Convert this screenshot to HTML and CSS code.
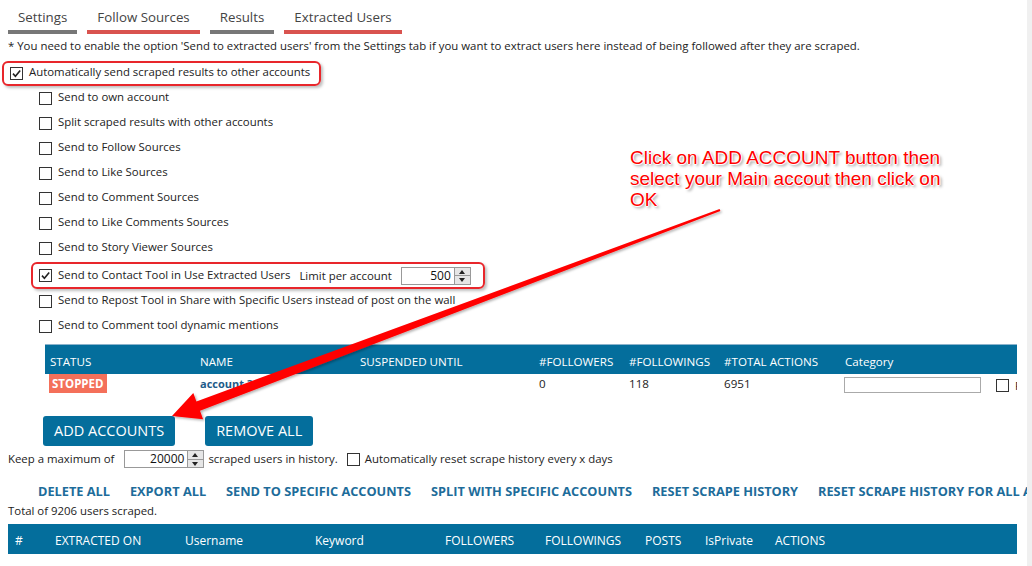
FILE: index.html
```html
<!DOCTYPE html>
<html>
<head>
<meta charset="utf-8">
<link rel="stylesheet" href="styles.css">
</head>
<body>
<div class="screen">
  <div class="page">
    <nav class="tabs">
      <span class="tab">Settings</span>
      <span class="tab red">Follow Sources</span>
      <span class="tab">Results</span>
      <span class="tab red">Extracted Users</span>
    </nav>
    <p class="note">* You need to enable the option 'Send to extracted users' from the Settings tab if you want to extract users here instead of being followed after they are scraped.</p>

    <div class="opt main hl">
      <span class="cb on"><svg viewBox="0 0 11 11"><path d="M2 5.6 L4.4 8.2 L9.2 2.4"/></svg></span>
      <span class="lbl">Automatically send scraped results to other accounts</span>
    </div>

    <div class="subs">
      <div class="opt"><span class="cb"></span><span class="lbl">Send to own account</span></div>
      <div class="opt"><span class="cb"></span><span class="lbl">Split scraped results with other accounts</span></div>
      <div class="opt"><span class="cb"></span><span class="lbl">Send to Follow Sources</span></div>
      <div class="opt"><span class="cb"></span><span class="lbl">Send to Like Sources</span></div>
      <div class="opt"><span class="cb"></span><span class="lbl">Send to Comment Sources</span></div>
      <div class="opt"><span class="cb"></span><span class="lbl">Send to Like Comments Sources</span></div>
      <div class="opt"><span class="cb"></span><span class="lbl">Send to Story Viewer Sources</span></div>
      <div class="opt contact hl">
        <span class="cb on"><svg viewBox="0 0 11 11"><path d="M2 5.6 L4.4 8.2 L9.2 2.4"/></svg></span>
        <span class="lbl">Send to Contact Tool in Use Extracted Users</span>
        <span class="limit">Limit per account</span>
        <span class="spin w70"><span class="val">500</span><span class="arrows"><i class="up"></i><i class="down"></i></span></span>
      </div>
      <div class="opt"><span class="cb"></span><span class="lbl">Send to Repost Tool in Share with Specific Users instead of post on the wall</span></div>
      <div class="opt"><span class="cb"></span><span class="lbl">Send to Comment tool dynamic mentions</span></div>
    </div>

    <div class="acc">
      <div class="acc-row acc-head">
        <span>STATUS</span><span>NAME</span><span>SUSPENDED UNTIL</span><span>#FOLLOWERS</span><span>#FOLLOWINGS</span><span>#TOTAL ACTIONS</span><span>Category</span><span></span>
      </div>
      <div class="acc-row acc-data">
        <span><b class="badge">STOPPED</b></span>
        <span class="accname">account 3</span>
        <span></span>
        <span>0</span>
        <span>118</span>
        <span>6951</span>
        <span><span class="catbox"></span></span>
        <span class="lastcol"><span class="cb"></span><span>F</span></span>
      </div>
    </div>

    <div class="btns">
      <span class="btn">ADD ACCOUNTS</span>
      <span class="btn">REMOVE ALL</span>
    </div>

    <div class="keep">
      <span>Keep a maximum of</span>
      <span class="spin w80"><span class="val">20000</span><span class="arrows"><i class="up"></i><i class="down"></i></span></span>
      <span>scraped users in history.</span>
      <span class="cb"></span>
      <span>Automatically reset scrape history every x days</span>
    </div>

    <div class="actions">
      <span>DELETE ALL</span>
      <span>EXPORT ALL</span>
      <span>SEND TO SPECIFIC ACCOUNTS</span>
      <span>SPLIT WITH SPECIFIC ACCOUNTS</span>
      <span>RESET SCRAPE HISTORY</span>
      <span>RESET SCRAPE HISTORY FOR ALL ACCOUNTS</span>
    </div>

    <div class="total">Total of 9206 users scraped.</div>

    <div class="users-head">
      <span>#</span><span>EXTRACTED ON</span><span>Username</span><span>Keyword</span><span>FOLLOWERS</span><span>FOLLOWINGS</span><span>POSTS</span><span>IsPrivate</span><span>ACTIONS</span>
    </div>
  </div>
  <div class="scroll"></div>

  <div class="callout">Click on ADD ACCOUNT button then<br>select your Main accout then click on<br>OK</div>

  <svg class="arrow" width="1032" height="566" viewBox="0 0 1032 566">
    <defs>
      <filter id="sh" x="-10%" y="-10%" width="120%" height="120%">
        <feDropShadow dx="1.5" dy="1.5" stdDeviation="1.2" flood-color="#000" flood-opacity="0.3"/>
      </filter>
    </defs>
    <polygon filter="url(#sh)" fill="#ff0000" points="172,416 193.3,393 196.4,401.4 719.6,209.1 720.4,210.9 200,410.8 203.1,419.2"/>
  </svg>
</div>
</body>
</html>
```

FILE: styles.css
```css
body {
  margin: 0;
  background: #fff;
  font-family: "Open Sans", "Noto Sans", sans-serif;
  font-size: 11.4px;
  color: #222;
}

.screen {
  position: relative;
  display: flex;
  width: 1032px;
  height: 566px;
  overflow: hidden;
}

.page {
  flex: none;
  width: 1027px;
  padding-left: 8px;
  box-sizing: border-box;
  overflow: hidden;
  white-space: nowrap;
}

.scroll {
  flex: 1;
  background: #f0f0f0;
}

/* tabs */
.tabs {
  display: flex;
  gap: 10px;
}

.tab {
  padding: 8px 10px 3px;
  font-size: 13.3px;
  line-height: 19px;
  color: #444;
  border-bottom: 4px solid #777;
}

.tab.red {
  border-color: #d9534f;
}

.note {
  margin: 4px 0 0;
  line-height: 16px;
}

/* checkbox rows */
.opt {
  display: flex;
  align-items: center;
  height: 25px;
}

.lbl {
  position: relative;
  top: -2.5px;
}

.cb {
  flex: none;
  display: inline-block;
  width: 11px;
  height: 11px;
  border: 1px solid #333;
  background: #fff;
  margin-right: 6px;
}

.cb svg {
  display: block;
  width: 11px;
  height: 11px;
}

.cb svg path {
  fill: none;
  stroke: #222;
  stroke-width: 1.6;
}

.hl {
  border: 2px solid #e8262b;
  border-radius: 6px;
  box-shadow: 2px 2px 3px rgba(0, 0, 0, 0.25);
  box-sizing: border-box;
}

.main {
  margin: 7px 0 0 -6px;
  padding-left: 6px;
  width: 319px;
}

.subs {
  padding-left: 31px;
}

.contact {
  margin: 1px 0 0 -8px;
  padding-left: 6px;
  height: 27px;
  width: 454px;
}

.contact .lbl {
  top: -1.5px;
}

.limit {
  margin-left: 9px;
  margin-right: 9px;
}

/* spin box */
.spin {
  display: inline-flex;
  height: 18px;
  border: 1px solid #999;
  box-sizing: border-box;
  background: #fff;
}

.spin.w70 { width: 70px; }
.spin.w80 { width: 80px; }

.spin .val {
  flex: 1;
  text-align: right;
  padding-right: 3px;
  line-height: 16px;
  color: #111;
  font-size: 12px;
}

.arrows {
  width: 15px;
  display: flex;
  flex-direction: column;
  border-left: 1px solid #999;
  background: #e6e6e6;
}

.arrows i {
  flex: 1;
  position: relative;
}

.arrows i + i {
  border-top: 1px solid #999;
}

.arrows i::after {
  content: "";
  position: absolute;
  left: 4px;
  top: 2px;
  border-left: 3.5px solid transparent;
  border-right: 3.5px solid transparent;
}

.arrows .up::after {
  border-bottom: 4px solid #222;
}

.arrows .down::after {
  top: 2px;
  border-top: 4px solid #222;
}

/* accounts table */
.acc {
  margin: 5px 0 0 37px;
  width: 972px;
  border-top: 1px solid #8bb3cc;
}

.acc-row {
  display: grid;
  grid-template-columns: 150px 160px 179px 90px 95px 121px 150px 1fr;
}

.acc-row > span {
  padding-left: 5px;
  overflow: hidden;
}

.acc-head {
  height: 29px;
  background: #046e9c;
  color: #fff;
  align-items: center;
  padding-top: 3px;
  box-sizing: border-box;
  font-size: 11.6px;
}

.acc-data {
  height: 22px;
  align-items: center;
  font-size: 11.6px;
  padding-bottom: 3px;
  box-sizing: border-box;
}

.acc-data > span:first-child {
  padding-left: 4px;
  align-self: start;
}

.badge {
  display: inline-block;
  background: #f4705a;
  color: #fff;
  font-weight: 700;
  font-size: 11.5px;
  line-height: 19px;
  padding: 0 3px;
}

.accname {
  font-size: 11px;
  font-weight: 700;
  color: #1e5b8a;
}

.catbox {
  display: block;
  width: 137px;
  height: 16px;
  border: 1px solid #aaa;
  box-sizing: border-box;
  margin: 3px 0 0 -1px;
}

.acc-row > .lastcol {
  display: flex;
  align-items: center;
  padding: 3px 0 0 6px;
}

/* buttons */
.btns {
  display: flex;
  gap: 30px;
  margin: 20px 0 0 35px;
}

.btn {
  height: 30px;
  line-height: 30px;
  padding: 0 11px;
  background: #046e9c;
  color: #fff;
  font-size: 14.5px;
  border-radius: 3px;
}

.keep {
  display: flex;
  align-items: center;
  height: 18px;
  margin-top: 4px;
}

.keep > span:not(.spin):not(.cb) {
  position: relative;
  top: -1px;
}

.keep > .spin {
  margin: 0 4px 0 10px;
}

.keep > .cb {
  margin-left: 9px;
  margin-right: 5px;
}

.actions {
  display: flex;
  gap: 20px;
  padding-left: 30px;
  margin-top: 13px;
  height: 20px;
  align-items: center;
  font-size: 12.75px;
  font-weight: 700;
  color: #1d6c9a;
}

.total {
  margin-top: 2px;
  line-height: 16px;
}

.users-head {
  display: grid;
  grid-template-columns: 42px 130px 130px 130px 100px 100px 60px 70px 1fr;
  margin-top: 5px;
  width: 1009px;
  height: 30px;
  align-items: center;
  padding-top: 2px;
  box-sizing: border-box;
  background: #046e9c;
  color: #fff;
  font-size: 12px;
}

.users-head > span {
  padding-left: 5px;
}

.users-head > span:first-child {
  padding-left: 7px;
}

/* annotation overlay */
.callout {
  position: absolute;
  left: 630px;
  top: 147px;
  font-family: "Liberation Sans", Arial, sans-serif;
  font-size: 19px;
  line-height: 21px;
  color: #ff0000;
  text-shadow: 1px 0 0 #fff, -1px 0 0 #fff, 0 1px 0 #fff, 0 -1px 0 #fff, 2px 2px 3px rgba(0, 0, 0, 0.45);
  white-space: nowrap;
}

.arrow {
  position: absolute;
  left: 0;
  top: 0;
  pointer-events: none;
}
```
